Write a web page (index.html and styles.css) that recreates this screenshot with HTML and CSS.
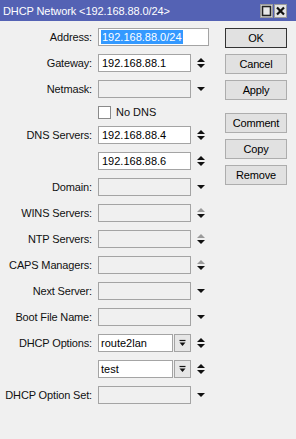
FILE: index.html
```html
<!DOCTYPE html>
<html>
<head>
<meta charset="utf-8">
<link rel="stylesheet" href="styles.css">
</head>
<body>
<div class="window">
  <div class="titlebar">
    <span class="title">DHCP Network &lt;192.168.88.0/24&gt;</span>
    <div class="tbtns">
      <span class="tbtn"><svg width="11" height="12" viewBox="0 0 11 12"><rect x="1.5" y="1.5" width="8" height="9" fill="#e8e8e8" stroke="#222" stroke-width="1.6"/></svg></span>
      <span class="tbtn"><svg width="11" height="12" viewBox="0 0 11 12"><path d="M2 2.5 L9 9.5 M9 2.5 L2 9.5" stroke="#111" stroke-width="2.2"/></svg></span>
    </div>
  </div>
  <div class="body">
    <div class="form">
      <div class="row"><label>Address:</label><div class="field wide"><span class="sel">192.168.88.0/24</span></div></div>
      <div class="row"><label>Gateway:</label><div class="field">192.168.88.1</div><svg class="ic" width="10" height="12" viewBox="0 0 10 12"><path d="M1 5 L5 1 L9 5 Z" fill="#111"/><path d="M1 7 L5 11 L9 7 Z" fill="#111"/></svg></div>
      <div class="row"><label>Netmask:</label><div class="field off"></div><svg class="ic" width="10" height="12" viewBox="0 0 10 12"><path d="M1 4 L5 8 L9 4 Z" fill="#111"/></svg></div>
      <div class="row chkrow"><label></label><span class="chk"></span><span class="chktext">No DNS</span></div>
      <div class="row"><label>DNS Servers:</label><div class="field">192.168.88.4</div><svg class="ic" width="10" height="12" viewBox="0 0 10 12"><path d="M1 5 L5 1 L9 5 Z" fill="#111"/><path d="M1 7 L5 11 L9 7 Z" fill="#111"/></svg></div>
      <div class="row"><label></label><div class="field">192.168.88.6</div><svg class="ic" width="10" height="12" viewBox="0 0 10 12"><path d="M1 5 L5 1 L9 5 Z" fill="#111"/><path d="M1 7 L5 11 L9 7 Z" fill="#111"/></svg></div>
      <div class="row"><label>Domain:</label><div class="field off"></div><svg class="ic" width="10" height="12" viewBox="0 0 10 12"><path d="M1 4 L5 8 L9 4 Z" fill="#111"/></svg></div>
      <div class="row"><label>WINS Servers:</label><div class="field off"></div><svg class="ic" width="10" height="12" viewBox="0 0 10 12"><path d="M1 5 L5 1 L9 5 Z" fill="#9a9a9a"/><path d="M1 7 L5 11 L9 7 Z" fill="#111"/></svg></div>
      <div class="row"><label>NTP Servers:</label><div class="field off"></div><svg class="ic" width="10" height="12" viewBox="0 0 10 12"><path d="M1 5 L5 1 L9 5 Z" fill="#9a9a9a"/><path d="M1 7 L5 11 L9 7 Z" fill="#111"/></svg></div>
      <div class="row"><label>CAPS Managers:</label><div class="field off"></div><svg class="ic" width="10" height="12" viewBox="0 0 10 12"><path d="M1 5 L5 1 L9 5 Z" fill="#9a9a9a"/><path d="M1 7 L5 11 L9 7 Z" fill="#111"/></svg></div>
      <div class="row"><label>Next Server:</label><div class="field off"></div><svg class="ic" width="10" height="12" viewBox="0 0 10 12"><path d="M1 4 L5 8 L9 4 Z" fill="#111"/></svg></div>
      <div class="row"><label>Boot File Name:</label><div class="field off"></div><svg class="ic" width="10" height="12" viewBox="0 0 10 12"><path d="M1 4 L5 8 L9 4 Z" fill="#111"/></svg></div>
      <div class="row"><label>DHCP Options:</label><div class="field short">route2lan</div><span class="ddbtn"><svg width="9" height="9" viewBox="0 0 9 9"><path d="M1.5 1.5 H7.5" stroke="#111" stroke-width="1.2"/><path d="M1.5 3.5 L4.5 7 L7.5 3.5 Z" fill="#111"/></svg></span><svg class="ic" width="10" height="12" viewBox="0 0 10 12"><path d="M1 5 L5 1 L9 5 Z" fill="#111"/><path d="M1 7 L5 11 L9 7 Z" fill="#111"/></svg></div>
      <div class="row"><label></label><div class="field short">test</div><span class="ddbtn"><svg width="9" height="9" viewBox="0 0 9 9"><path d="M1.5 1.5 H7.5" stroke="#111" stroke-width="1.2"/><path d="M1.5 3.5 L4.5 7 L7.5 3.5 Z" fill="#111"/></svg></span><svg class="ic" width="10" height="12" viewBox="0 0 10 12"><path d="M1 5 L5 1 L9 5 Z" fill="#111"/><path d="M1 7 L5 11 L9 7 Z" fill="#111"/></svg></div>
      <div class="row"><label>DHCP Option Set:</label><div class="field off"></div><svg class="ic" width="10" height="12" viewBox="0 0 10 12"><path d="M1 4 L5 8 L9 4 Z" fill="#111"/></svg></div>
    </div>
    <div class="buttons">
      <div class="btn def">OK</div>
      <div class="btn">Cancel</div>
      <div class="btn">Apply</div>
      <div class="btn sep">Comment</div>
      <div class="btn">Copy</div>
      <div class="btn">Remove</div>
    </div>
  </div>
</div>
</body>
</html>
```

FILE: styles.css
```css
html, body {
  margin: 0;
  padding: 0;
  background: #f0f0f0;
}
.window {
  width: 296px;
  height: 439px;
  background: #f0f0f0;
  font-family: "Liberation Sans", Arial, sans-serif;
  font-size: 11px;
  color: #000;
  overflow: hidden;
}
.titlebar {
  height: 21px;
  background: #5462b4;
  display: flex;
  align-items: center;
  justify-content: space-between;
}
.title {
  color: #fff;
  font-size: 11px;
  padding-left: 3px;
  letter-spacing: -0.1px;
}
.tbtns {
  display: flex;
  gap: 1px;
  margin-right: 9px;
}
.tbtn {
  width: 13px;
  height: 14px;
  background: #e4e4e4;
  border: 1px solid #9c9c9c;
  box-sizing: border-box;
  display: flex;
  align-items: center;
  justify-content: center;
}
.body {
  display: flex;
  padding-top: 7px;
}
.form {
  width: 225px;
  display: flex;
  flex-direction: column;
  gap: 8px;
}
.row {
  display: flex;
  align-items: center;
  height: 18px;
}
.row label {
  width: 92px;
  text-align: right;
  letter-spacing: -0.15px;
  margin-right: 6px;
  color: #111;
  flex: none;
  white-space: nowrap;
}
.field {
  box-sizing: border-box;
  width: 93px;
  height: 18px;
  border: 1px solid #a4a4a4;
  background: #fff;
  padding-left: 3px;
  line-height: 16px;
  white-space: nowrap;
  overflow: hidden;
  flex: none;
}
.field.wide { width: 111px; padding-left: 2px; }
.field.short { width: 75px; padding-left: 2px; }
.field.off { background: #f0f0f0; }
.sel {
  background: #3399ff;
  color: #fff;
  display: inline-block;
  line-height: 14px;
  padding: 0 1px;
}
.ic {
  margin-left: 5px;
  flex: none;
}
.ddbtn {
  box-sizing: border-box;
  width: 17px;
  height: 18px;
  margin-left: 1px;
  border: 1px solid #a4a4a4;
  background: #e6e6e6;
  display: flex;
  align-items: center;
  justify-content: center;
  flex: none;
}
.chkrow { height: 12px; }
.chk {
  box-sizing: border-box;
  width: 13px;
  height: 13px;
  border: 1px solid #8a8a8a;
  background: #fff;
  flex: none;
}
.chktext {
  margin-left: 5px;
  color: #111;
}
.buttons {
  display: flex;
  flex-direction: column;
  gap: 6px;
}
.btn {
  box-sizing: border-box;
  width: 62px;
  height: 20px;
  border: 1px solid #adadad;
  background: #e1e1e1;
  text-align: center;
  line-height: 18px;
  letter-spacing: -0.2px;
}
.btn.def { border-color: #333; }
.btn.sep { margin-top: 7px; }
```
